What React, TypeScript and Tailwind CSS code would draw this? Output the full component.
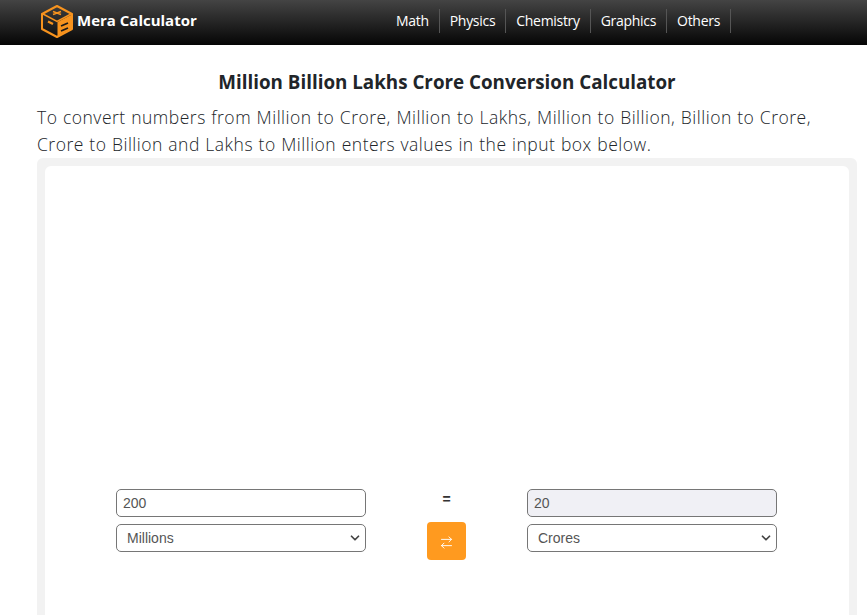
import { ArrowRightLeft, ChevronDown } from "lucide-react";

const links = ["Math", "Physics", "Chemistry", "Graphics", "Others"];

function Logo() {
  return (
    <svg width="34" height="34" viewBox="0 0 34 34" fill="none">
      <path d="M17 2 L32 10 V25 L17 33 L2 25 V10 Z" stroke="#f7931e" strokeWidth="2" strokeLinejoin="round" />
      <path d="M3 10 L17 17.5 L31 10" stroke="#f7931e" strokeWidth="1.5" />
      <path d="M17.5 18 V32 L31 25 V11 Z" fill="#f7931e" />
      <path d="M13 7.5 L21 10.5 M21 7.5 L13 10.5" stroke="#f7931e" strokeWidth="1.8" />
      <path d="M8 17.5 L13 20" stroke="#f7931e" strokeWidth="2.2" />
      <path d="M21 22 L28 19 M21 27 L28 24" stroke="#1a1a1a" strokeWidth="1.8" />
    </svg>
  );
}

function NavBar() {
  return (
    <div className="flex h-[45px] items-center bg-[radial-gradient(rgba(255,255,255,0.07)_0.5px,transparent_0.5px),linear-gradient(to_bottom,#444444,#050505)] bg-[length:2px_2px,100%_100%] pb-[4px] font-['Open_Sans',sans-serif]">
      <div className="ml-[40px] flex w-[346px] items-center gap-[3px]">
        <Logo />
        <span className="text-[15px] font-bold text-white">Mera Calculator</span>
      </div>
      <div className="flex items-center">
        {links.map((link) => (
          <div
            key={link}
            className="flex h-6 items-center border-r border-[#555] px-[10px] text-sm tracking-[-0.3px] text-white"
          >
            {link}
          </div>
        ))}
      </div>
    </div>
  );
}

function Field({ value, readOnly }: { value: string; readOnly?: boolean }) {
  return (
    <div
      className={
        "flex h-7 w-[250px] items-center rounded-[5px] border border-[#767676] px-[6px] text-sm text-[#555] " +
        (readOnly ? "bg-[#f0f0f5]" : "bg-white")
      }
    >
      {value}
    </div>
  );
}

function Picker({ value }: { value: string }) {
  return (
    <div className="flex h-7 w-[250px] items-center justify-between rounded-[5px] border border-[#767676] bg-white pr-[3px] pl-[10px] text-sm text-[#555]">
      {value}
      <ChevronDown size={14} strokeWidth={3} className="text-[#444]" />
    </div>
  );
}

function App() {
  return (
    <div className="h-screen overflow-hidden bg-white font-['Liberation_Sans',sans-serif]">
      <NavBar />
      <div className="px-[37px] pt-[24px]">
        <h1 className="pl-[27px] text-center font-['Open_Sans',sans-serif] text-[18.8px] leading-[26px] font-bold text-[#212529]">
          Million Billion Lakhs Crore Conversion Calculator
        </h1>
        <p className="mt-[9px] mr-[19px] text-justify font-['Open_Sans',sans-serif] text-[17.5px] leading-[27px] font-light tracking-[0.5px] [word-spacing:0.45px] text-[#212529]">
          To convert numbers from Million to Crore, Million to Lakhs, Million to Billion, Billion to Crore,
          Crore to Billion and Lakhs to Million enters values in the input box below.
        </p>
        <div className="h-[600px] w-[820px] rounded-md bg-[#f2f2f2] p-2">
          <div className="h-full rounded-md bg-white pt-[323px] pr-[72px] pl-[71px]">
            <div className="flex justify-between">
              <div className="flex flex-col gap-[7px]">
                <Field value="200" />
                <Picker value="Millions" />
              </div>
              <div className="flex flex-col items-center">
                <span className="h-[33px] text-sm leading-5 font-bold text-[#333]">=</span>
                <div className="flex h-[38px] w-[39px] items-center justify-center rounded-[4px] bg-[#ff9a1f] pt-[3px]">
                  <ArrowRightLeft size={15} strokeWidth={1.5} className="text-white" />
                </div>
              </div>
              <div className="flex flex-col gap-[7px]">
                <Field value="20" readOnly />
                <Picker value="Crores" />
              </div>
            </div>
          </div>
        </div>
      </div>
    </div>
  );
}

export default App;
